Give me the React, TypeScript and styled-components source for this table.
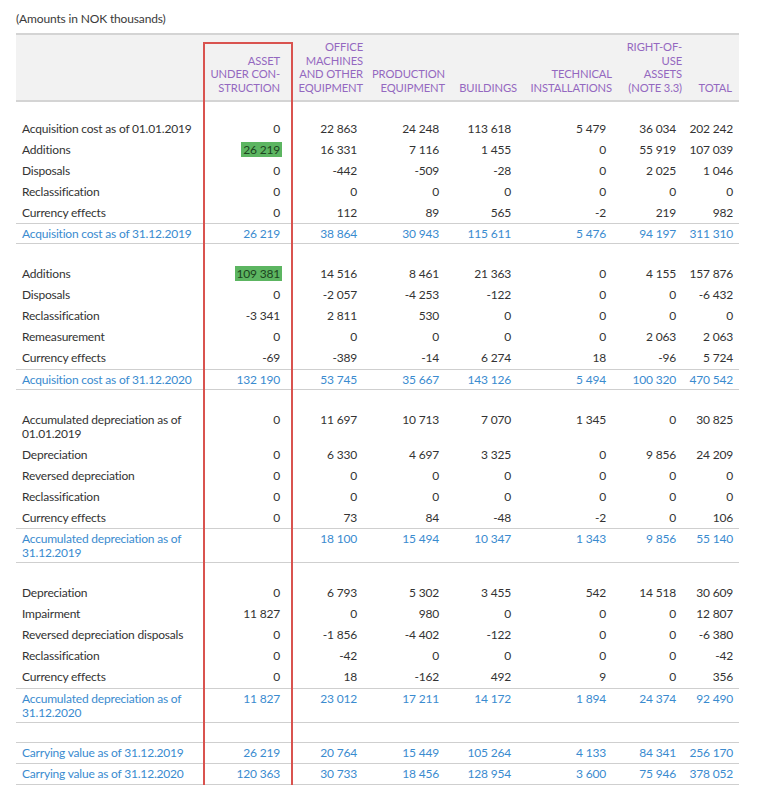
import React from 'react';
import styled, { createGlobalStyle } from 'styled-components';

const GlobalStyle = createGlobalStyle`
  body {
    margin: 0;
    background: #ffffff;
    font-family: 'Lato', 'Open Sans', sans-serif;
    color: #333333;
  }
`;

const Page = styled.div`
  padding: 11px 21px 0 16px;
`;

const Caption = styled.div`
  font-size: 12px;
  line-height: 16px;
  letter-spacing: -0.15px;
  color: #3a3a3a;
  margin-bottom: 6px;
`;

const TableWrap = styled.div`
  position: relative;
  width: 723px;
`;

const Table = styled.table`
  width: 723px;
  table-layout: fixed;
  border-collapse: separate;
  border-spacing: 0;
  font-size: 12px;
  font-weight: 400;
  letter-spacing: -0.2px;
`;

const HeadRow = styled.tr`
  background: #f2f2f2;
`;

const Th = styled.th<{ $pr?: number }>`
  font-weight: 400;
  font-size: 11.2px;
  line-height: 13.5px;
  letter-spacing: -0.1px;
  color: #9468c0;
  text-align: right;
  vertical-align: bottom;
  padding: 5px ${p => p.$pr ?? 0}px 6px 0;
  border-top: 2px solid #d4d4d4;
  border-bottom: 2px solid #d4d4d4;
  white-space: nowrap;
`;

const Spacer = styled.tr<{ $h: number; $line?: boolean }>`
  td {
    height: ${p => p.$h - (p.$line ? 1 : 0)}px;
    padding: 0;
    border-bottom: ${p => (p.$line ? '1px solid #cfcfcf' : 'none')};
  }
`;

type Kind = 'plain' | 'sub' | 'carry';

const Row = styled.tr<{ $kind: Kind }>`
  td {
    line-height: 14px;
    vertical-align: top;
    padding: ${p => (p.$kind === 'plain' ? '3.5px 6px 3.5px 6px' : p.$kind === 'sub' ? '3px 6px 2px 6px' : '3.5px 6px 2.5px 6px')};
    color: ${p => (p.$kind === 'plain' ? '#333333' : '#3a8bcf')};
    border-top: ${p => (p.$kind === 'sub' ? '1px solid #cfcfcf' : 'none')};
    border-bottom: ${p => (p.$kind === 'plain' ? 'none' : '1px solid #cfcfcf')};
  }
`;

const Label = styled.td`
  text-align: left;
  && {
    padding-right: 0;
  }
`;

const Num = styled.td`
  text-align: right;
  white-space: nowrap;
`;

const Mark = styled.span`
  background: #5cb561;
  color: #1d4420;
  padding: 0 2px;
  margin-right: -2px;
`;

// red outline drawn over the "asset under construction" column
const Frame = styled.div`
  position: absolute;
  left: 187px;
  top: 9px;
  width: 86px;
  height: 747px;
  border: 2px solid #d9534f;
  pointer-events: none;
`;

type Line = { label: string; values: (string | null)[]; kind?: Kind; mark?: boolean };
type Section = { gap: number; line?: boolean; rows: Line[] };

const sections: Section[] = [
  {
    gap: 16,
    rows: [
      { label: 'Acquisition cost as of 01.01.2019', values: ['0', '22 863', '24 248', '113 618', '5 479', '36 034', '202 242'] },
      { label: 'Additions', values: ['26 219', '16 331', '7 116', '1 455', '0', '55 919', '107 039'], mark: true },
      { label: 'Disposals', values: ['0', '-442', '-509', '-28', '0', '2 025', '1 046'] },
      { label: 'Reclassification', values: ['0', '0', '0', '0', '0', '0', '0'] },
      { label: 'Currency effects', values: ['0', '112', '89', '565', '-2', '219', '982'] },
      { label: 'Acquisition cost as of 31.12.2019', values: ['26 219', '38 864', '30 943', '115 611', '5 476', '94 197', '311 310'], kind: 'sub' },
    ],
  },
  {
    gap: 19.5,
    rows: [
      { label: 'Additions', values: ['109 381', '14 516', '8 461', '21 363', '0', '4 155', '157 876'], mark: true },
      { label: 'Disposals', values: ['0', '-2 057', '-4 253', '-122', '0', '0', '-6 432'] },
      { label: 'Reclassification', values: ['-3 341', '2 811', '530', '0', '0', '0', '0'] },
      { label: 'Remeasurement', values: ['0', '0', '0', '0', '0', '2 063', '2 063'] },
      { label: 'Currency effects', values: ['-69', '-389', '-14', '6 274', '18', '-96', '5 724'] },
      { label: 'Acquisition cost as of 31.12.2020', values: ['132 190', '53 745', '35 667', '143 126', '5 494', '100 320', '470 542'], kind: 'sub' },
    ],
  },
  {
    gap: 19.5,
    rows: [
      { label: 'Accumulated depreciation as of 01.01.2019', values: ['0', '11 697', '10 713', '7 070', '1 345', '0', '30 825'] },
      { label: 'Depreciation', values: ['0', '6 330', '4 697', '3 325', '0', '9 856', '24 209'] },
      { label: 'Reversed depreciation', values: ['0', '0', '0', '0', '0', '0', '0'] },
      { label: 'Reclassification', values: ['0', '0', '0', '0', '0', '0', '0'] },
      { label: 'Currency effects', values: ['0', '73', '84', '-48', '-2', '0', '106'] },
      { label: 'Accumulated depreciation as of 31.12.2019', values: [null, '18 100', '15 494', '10 347', '1 343', '9 856', '55 140'], kind: 'sub' },
    ],
  },
  {
    gap: 19.5,
    rows: [
      { label: 'Depreciation', values: ['0', '6 793', '5 302', '3 455', '542', '14 518', '30 609'] },
      { label: 'Impairment', values: ['11 827', '0', '980', '0', '0', '0', '12 807'] },
      { label: 'Reversed depreciation disposals', values: ['0', '-1 856', '-4 402', '-122', '0', '0', '-6 380'] },
      { label: 'Reclassification', values: ['0', '-42', '0', '0', '0', '0', '-42'] },
      { label: 'Currency effects', values: ['0', '18', '-162', '492', '9', '0', '356'] },
      { label: 'Accumulated depreciation as of 31.12.2020', values: ['11 827', '23 012', '17 211', '14 172', '1 894', '24 374', '92 490'], kind: 'sub' },
    ],
  },
  {
    gap: 20,
    line: true,
    rows: [
      { label: 'Carrying value as of 31.12.2019', values: ['26 219', '20 764', '15 449', '105 264', '4 133', '84 341', '256 170'], kind: 'carry' },
      { label: 'Carrying value as of 31.12.2020', values: ['120 363', '30 733', '18 456', '128 954', '3 600', '75 946', '378 052'], kind: 'carry' },
    ],
  },
];

const widths = [189, 81, 77, 82, 72, 95, 70, 57];

const App: React.FC = () => (
  <Page>
    <GlobalStyle />
    <Caption>(Amounts in NOK thousands)</Caption>
    <TableWrap>
      <Table>
        <colgroup>
          {widths.map((w, i) => (
            <col key={i} style={{ width: w }} />
          ))}
        </colgroup>
        <thead>
          <HeadRow>
            <Th />
            <Th $pr={6}>ASSET<br />UNDER CON-<br />STRUCTION</Th>
            <Th>OFFICE<br />MACHINES<br />AND OTHER<br />EQUIPMENT</Th>
            <Th>PRODUCTION<br />EQUIPMENT</Th>
            <Th>BUILDINGS</Th>
            <Th>TECHNICAL<br />INSTALLATIONS</Th>
            <Th>RIGHT-OF-<br />USE<br />ASSETS<br />(NOTE 3.3)</Th>
            <Th $pr={7}>TOTAL</Th>
          </HeadRow>
        </thead>
        <tbody>
          {sections.map((section, si) => (
            <React.Fragment key={si}>
              <Spacer $h={section.gap} $line={section.line}>
                <td colSpan={8} />
              </Spacer>
              {section.rows.map((row, ri) => (
                <Row key={ri} $kind={row.kind ?? 'plain'}>
                  <Label>{row.label}</Label>
                  {row.values.map((v, vi) => (
                    <Num key={vi}>
                      {v === null ? '' : row.mark && vi === 0 ? <Mark>{v}</Mark> : v}
                    </Num>
                  ))}
                </Row>
              ))}
            </React.Fragment>
          ))}
        </tbody>
      </Table>
      <Frame />
    </TableWrap>
  </Page>
);

export default App;
